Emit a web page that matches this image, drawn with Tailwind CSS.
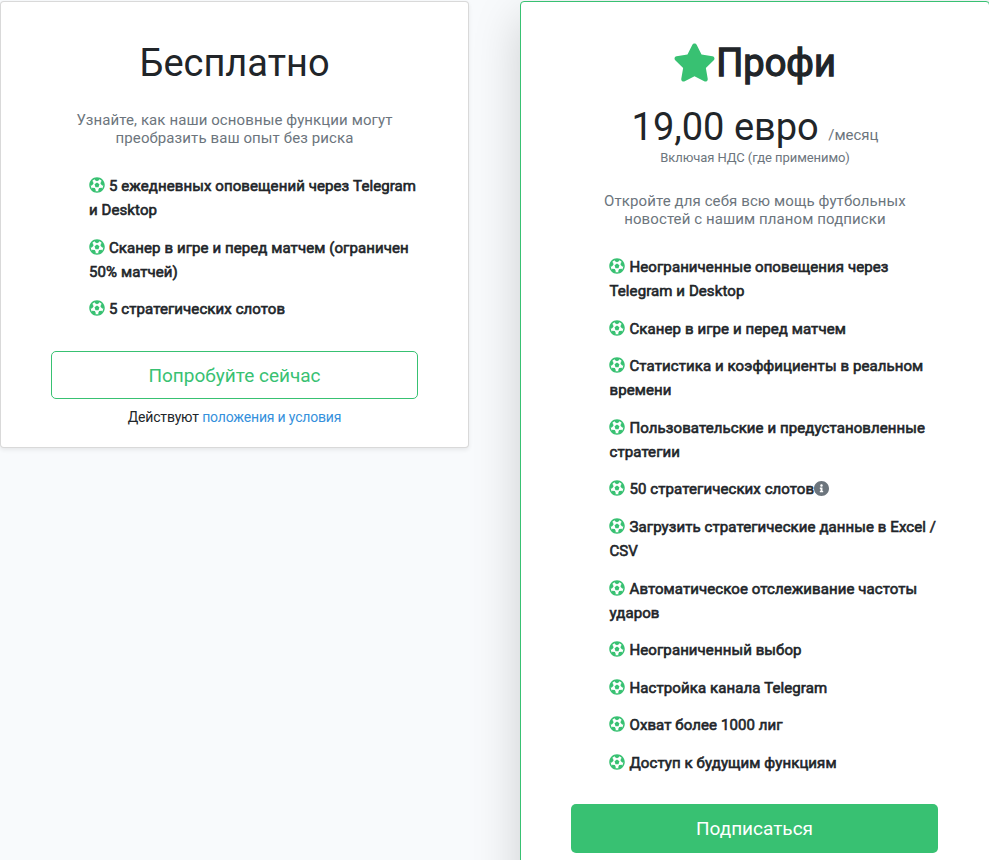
<!DOCTYPE html>
<html lang="ru">

<head>
    <meta charset="UTF-8">
    <meta name="viewport" content="width=device-width, initial-scale=1.0">
    <title>Тарифы</title>
    <script src="https://cdn.jsdelivr.net/npm/@tailwindcss/browser@4"></script>
</head>

<body class="bg-[#f8fafc] h-[860px] overflow-hidden font-[Roboto,sans-serif] text-[#212529]">
    <svg class="hidden">
        <symbol id="ball" viewBox="0 0 512 512">
            <path d="M504 256c0 136.967-111.033 248-248 248S8 392.967 8 256 119.033 8 256 8s248 111.033 248 248zm-48 0l-.003-.282-26.064 22.741-62.679-58.5 16.454-84.355 34.303 3.072c-24.889-34.216-60.004-60.089-100.709-73.141l13.651 31.939L256 139l-74.953-41.525 13.651-31.939c-40.631 13.028-75.78 38.87-100.709 73.141l34.565-3.073 16.192 84.355-62.678 58.5-26.064-22.741-.003.282c0 43.015 13.497 83.952 38.472 117.991l7.704-33.897 85.138 10.447 36.301 77.826-29.902 17.786c40.202 13.122 84.29 13.148 124.572 0l-29.902-17.786 36.301-77.826 85.138-10.447 7.704 33.897C442.503 339.952 456 299.015 456 256zm-248.102 69.571l-29.894-91.312L256 177.732l77.996 56.527-29.622 91.312h-96.476z" />
        </symbol>
    </svg>

    <div class="flex items-start gap-[51px] w-[990px] pt-px">
        <!-- Free plan -->
        <div class="w-[469px] h-[447px] shrink-0 bg-white border border-black/15 rounded shadow-[0_2px_4px_rgba(0,0,0,0.075)] px-[50px] pt-[38px]">
            <h2 class="text-center text-[38px] leading-[46px]">Бесплатно</h2>
            <p class="mt-[25px] text-center text-[15px] leading-[18px] tracking-[0.1px] text-[#6c757d]">Узнайте, как наши основные функции могут<br>преобразить ваш опыт без риска</p>
            <ul class="mt-[27px] pl-[38px] flex flex-col gap-[13.6px] text-[15px] leading-6 tracking-[0.09px] whitespace-nowrap [-webkit-text-stroke:0.6px]">
                <li><svg class="inline size-4 -ml-[0.5px] mr-[4.5px] align-[-2px] fill-[#38c172]"><use href="#ball" /></svg>5 ежедневных оповещений через Telegram<br>и Desktop</li>
                <li><svg class="inline size-4 -ml-[0.5px] mr-[4.5px] align-[-2px] fill-[#38c172]"><use href="#ball" /></svg>Сканер в игре и перед матчем (ограничен<br>50% матчей)</li>
                <li><svg class="inline size-4 -ml-[0.5px] mr-[4.5px] align-[-2px] fill-[#38c172]"><use href="#ball" /></svg>5 стратегических слотов</li>
            </ul>
            <a href="#" class="mt-[29.8px] flex h-12 items-center justify-center rounded-[5px] border border-[#38c172] pt-0.5 text-[#38c172] text-[19px]">Попробуйте сейчас</a>
            <p class="mt-2 text-center text-sm tracking-[-0.18px]">Действуют <a href="#" class="text-[#3490dc]">положения и условия</a></p>
        </div>

        <!-- Pro plan -->
        <div class="w-[470px] h-[900px] shrink-0 bg-white border border-[#38c172] rounded shadow-[0_16px_48px_rgba(0,0,0,0.175)] px-[50px] pt-[38px]">
            <h2 class="flex items-center justify-center text-[38px] leading-[46px] [-webkit-text-stroke:1.3px]">
                <svg class="w-[43px] h-[39px] -ml-px -mt-0.5 fill-[#38c172] [-webkit-text-stroke:0]" viewBox="0 0 576 512"><path d="M259.3 17.8L194 150.2 47.9 171.5c-26.2 3.8-36.7 36.1-17.7 54.6l105.7 103-25 145.5c-4.5 26.3 23.2 46 46.4 33.7L288 439.6l130.7 68.7c23.2 12.2 50.9-7.4 46.4-33.7l-25-145.5 105.7-103c19-18.5 8.5-50.8-17.7-54.6L382 150.2 316.7 17.8c-11.7-23.6-45.6-23.9-57.4 0z" /></svg>Профи
            </h2>
            <div class="mt-[17.5px] h-[46px] text-center text-[38px] leading-[46px]">19,00 евро <span class="text-[15px] text-[#6c757d]">/месяц</span></div>
            <p class="mt-[0.5px] text-center text-[13px] leading-[16px] tracking-[-0.07px] text-[#6c757d]">Включая НДС (где применимо)</p>
            <p class="mt-[26px] text-center text-[15px] leading-[18px] tracking-[0.1px] text-[#6c757d]">Откройте для себя всю мощь футбольных<br>новостей с нашим планом подписки</p>
            <ul class="mt-[27px] pl-[38.5px] flex flex-col gap-[13.6px] text-[15px] leading-6 tracking-[0.09px] whitespace-nowrap [-webkit-text-stroke:0.6px]">
                <li><svg class="inline size-4 -ml-[0.5px] mr-[4.5px] align-[-2px] fill-[#38c172]"><use href="#ball" /></svg>Неограниченные оповещения через<br>Telegram и Desktop</li>
                <li><svg class="inline size-4 -ml-[0.5px] mr-[4.5px] align-[-2px] fill-[#38c172]"><use href="#ball" /></svg>Сканер в игре и перед матчем</li>
                <li><svg class="inline size-4 -ml-[0.5px] mr-[4.5px] align-[-2px] fill-[#38c172]"><use href="#ball" /></svg>Статистика и коэффициенты в реальном<br>времени</li>
                <li><svg class="inline size-4 -ml-[0.5px] mr-[4.5px] align-[-2px] fill-[#38c172]"><use href="#ball" /></svg>Пользовательские и предустановленные<br>стратегии</li>
                <li><svg class="inline size-4 -ml-[0.5px] mr-[4.5px] align-[-2px] fill-[#38c172]"><use href="#ball" /></svg>50 стратегических слотов<svg class="inline w-[15px] h-[15px] align-[-2px] fill-[#6c757d]" viewBox="8 8 496 496"><path d="M256 8C119.043 8 8 119.083 8 256c0 136.997 111.043 248 248 248s248-111.003 248-248C504 119.083 392.957 8 256 8zm0 110c23.196 0 42 18.804 42 42s-18.804 42-42 42-42-18.804-42-42 18.804-42 42-42zm56 254c0 6.627-5.373 12-12 12h-88c-6.627 0-12-5.373-12-12v-24c0-6.627 5.373-12 12-12h12v-64h-12c-6.627 0-12-5.373-12-12v-24c0-6.627 5.373-12 12-12h64c6.627 0 12 5.373 12 12v100h12c6.627 0 12 5.373 12 12v24z" /></svg></li>
                <li><svg class="inline size-4 -ml-[0.5px] mr-[4.5px] align-[-2px] fill-[#38c172]"><use href="#ball" /></svg>Загрузить стратегические данные в Excel /<br>CSV</li>
                <li><svg class="inline size-4 -ml-[0.5px] mr-[4.5px] align-[-2px] fill-[#38c172]"><use href="#ball" /></svg>Автоматическое отслеживание частоты<br>ударов</li>
                <li><svg class="inline size-4 -ml-[0.5px] mr-[4.5px] align-[-2px] fill-[#38c172]"><use href="#ball" /></svg>Неограниченный выбор</li>
                <li><svg class="inline size-4 -ml-[0.5px] mr-[4.5px] align-[-2px] fill-[#38c172]"><use href="#ball" /></svg>Настройка канала Telegram</li>
                <li><svg class="inline size-4 -ml-[0.5px] mr-[4.5px] align-[-2px] fill-[#38c172]"><use href="#ball" /></svg>Охват более 1000 лиг</li>
                <li><svg class="inline size-4 -ml-[0.5px] mr-[4.5px] align-[-2px] fill-[#38c172]"><use href="#ball" /></svg>Доступ к будущим функциям</li>
            </ul>
            <a href="#" class="mt-[29px] mr-px flex h-[49px] items-center justify-center rounded-[5px] bg-[#38c172] pt-px text-white text-[19px]">Подписаться</a>
        </div>
    </div>
</body>

</html>
